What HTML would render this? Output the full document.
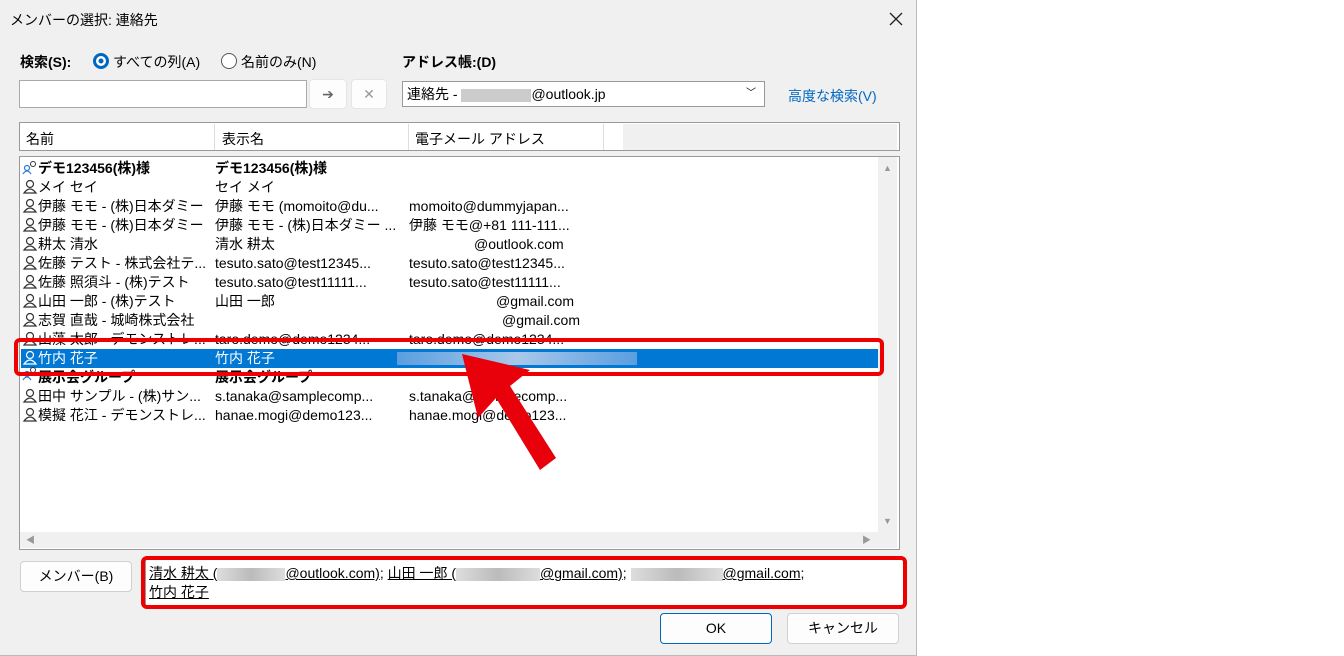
<!DOCTYPE html><html><head><meta charset="utf-8"><style>
body{margin:0;width:1344px;height:656px;background:#fff;font-family:"Liberation Sans","Noto Sans CJK JP",sans-serif;font-size:14px;color:#000;position:relative;overflow:hidden}
.dlg{position:absolute;left:0;top:0;width:916px;height:655px;background:#f0f0f0;border-right:1px solid #bbb;border-bottom:1px solid #bbb}
.a{position:absolute;white-space:nowrap}
.row{position:absolute;left:22px;height:19px;line-height:19px;width:856px}
.row span{position:absolute;white-space:nowrap}
.c1{left:16px}.c2{left:193px}.c3{left:387px}
.b{font-weight:bold}
.btn{position:absolute;background:#fdfdfd;border:1px solid #d0d0d0;border-radius:4px;text-align:center;font-size:14px}
.u{text-decoration:underline}
.blur{display:inline-block;background:linear-gradient(90deg,#ddd,#bbb,#ddd);height:13px;vertical-align:middle}
</style></head><body>
<div class="dlg">
<div class="a" style="left:10px;top:10px;font-size:14px">メンバーの選択: 連絡先</div>
<svg class="a" style="left:889px;top:12px" width="14" height="14"><path d="M1 1L13 13M13 1L1 13" stroke="#222" stroke-width="1.3"/></svg>
<div class="a b" style="left:20px;top:52px">検索(S):</div>
<div class="a" style="left:93px;top:53px;width:10px;height:10px;border:3px solid #0067c0;border-radius:50%;background:#fff"></div>
<div class="a" style="left:96px;top:56px;width:10px;height:10px;border-radius:50%;background:#0067c0;transform:scale(.5)"></div>
<div class="a" style="left:113px;top:52px">すべての列(A)</div>
<div class="a" style="left:221px;top:53px;width:14px;height:14px;border:1px solid #555;border-radius:50%;background:#fff"></div>
<div class="a" style="left:241px;top:52px">名前のみ(N)</div>
<div class="a b" style="left:402px;top:52px">アドレス帳:(D)</div>
<div class="a" style="left:19px;top:80px;width:286px;height:26px;background:#fff;border:1px solid #aaa"></div>
<div class="btn" style="left:309px;top:79px;width:36px;height:28px;line-height:28px;color:#666;border-color:#e5e5e5">➔</div>
<div class="btn" style="left:351px;top:79px;width:34px;height:28px;line-height:28px;color:#999;border-color:#e5e5e5">✕</div>
<div class="a" style="left:402px;top:81px;width:357px;height:24px;background:#fff;border:1px solid #999;line-height:24px;padding-left:4px">連絡先 - <span class="blur" style="width:70px;background:#ccc"></span>@outlook.jp<span style="position:absolute;right:8px;font-size:10px">﹀</span></div>
<div class="a" style="left:788px;top:86px;color:#0067c0">高度な検索(V)</div>
<div class="a" style="left:19px;top:122px;width:879px;height:27px;background:#fff;border:1px solid #999"></div>
<div class="a" style="left:26px;top:129px">名前</div>
<div class="a" style="left:214px;top:124px;height:26px;border-left:1px solid #ddd"></div>
<div class="a" style="left:222px;top:129px">表示名</div>
<div class="a" style="left:408px;top:124px;height:26px;border-left:1px solid #ddd"></div>
<div class="a" style="left:415px;top:129px">電子メール アドレス</div>
<div class="a" style="left:603px;top:124px;height:26px;border-left:1px solid #ddd"></div>
<div class="a" style="left:623px;top:124px;height:26px;width:274px;background:#f0f0f0"></div>
<div class="a" style="left:19px;top:156px;width:879px;height:392px;background:#fff;border:1px solid #999"></div>
<div class="a" style="left:878px;top:157px;width:19px;height:375px;background:#f0f0f0;color:#999;font-size:9px;text-align:center"><div style="margin-top:6px">▲</div><div style="position:absolute;bottom:6px;width:19px">▼</div></div>
<div class="a" style="left:20px;top:532px;width:877px;height:16px;background:#f0f0f0;color:#999;font-size:9px;line-height:16px"><span style="margin-left:6px">◀</span><span style="position:absolute;right:26px">▶</span></div>
<div style="position:absolute;left:0;top:0">
<div class="row b" style="top:159px"><span class="c1">デモ123456(株)様</span><span class="c2">デモ123456(株)様</span></div>
<div class="row" style="top:178px"><span class="c1">メイ セイ</span><span class="c2">セイ メイ</span></div>
<div class="row" style="top:197px"><span class="c1">伊藤 モモ - (株)日本ダミー</span><span class="c2">伊藤 モモ (momoito@du...</span><span class="c3">momoito@dummyjapan...</span></div>
<div class="row" style="top:216px"><span class="c1">伊藤 モモ - (株)日本ダミー</span><span class="c2">伊藤 モモ - (株)日本ダミー ...</span><span class="c3">伊藤 モモ@+81 111-111...</span></div>
<div class="row" style="top:235px"><span class="c1">耕太 清水</span><span class="c2">清水 耕太</span><span class="c3" style="left:452px">@outlook.com</span></div>
<div class="row" style="top:254px"><span class="c1">佐藤 テスト - 株式会社テ...</span><span class="c2">tesuto.sato@test12345...</span><span class="c3">tesuto.sato@test12345...</span></div>
<div class="row" style="top:273px"><span class="c1">佐藤 照須斗 - (株)テスト</span><span class="c2">tesuto.sato@test11111...</span><span class="c3">tesuto.sato@test11111...</span></div>
<div class="row" style="top:292px"><span class="c1">山田 一郎 - (株)テスト</span><span class="c2">山田 一郎</span><span class="c3" style="left:474px">@gmail.com</span></div>
<div class="row" style="top:311px"><span class="c1">志賀 直哉 - 城崎株式会社</span><span class="c3" style="left:480px">@gmail.com</span></div>
<div class="row" style="top:330px"><span class="c1">山藻 太郎 - デモンストレ...</span><span class="c2">taro.demo@demo1234...</span><span class="c3">taro.demo@demo1234...</span></div>
<div class="row" style="top:349px;background:#0078d4;color:#fff;left:21px;width:857px"><span class="c1" style="left:17px">竹内 花子</span><span class="c2" style="left:194px">竹内 花子</span><span style="left:376px;top:3px;width:240px;height:13px;background:linear-gradient(90deg,#5a9ee0,#a8c8ea,#5a9ee0)"></span></div>
<div class="row b" style="top:368px"><span class="c1">展示会グループ</span><span class="c2">展示会グループ</span></div>
<div class="row" style="top:387px"><span class="c1">田中 サンプル - (株)サン...</span><span class="c2">s.tanaka@samplecomp...</span><span class="c3">s.tanaka@samplecomp...</span></div>
<div class="row" style="top:406px"><span class="c1">模擬 花江 - デモンストレ...</span><span class="c2">hanae.mogi@demo123...</span><span class="c3">hanae.mogi@demo123...</span></div>
</div>
<svg class="a" style="left:20px;top:160px" width="20" height="266">
<g fill="none" stroke="#333" stroke-width="1.2">
<circle cx="10" cy="24" r="3.5"/><path d="M4 33 q6 -8 12 0 z"/>
<circle cx="10" cy="43" r="3.5"/><path d="M4 52 q6 -8 12 0 z"/>
<circle cx="10" cy="62" r="3.5"/><path d="M4 71 q6 -8 12 0 z"/>
<circle cx="10" cy="81" r="3.5"/><path d="M4 90 q6 -8 12 0 z"/>
<circle cx="10" cy="100" r="3.5"/><path d="M4 109 q6 -8 12 0 z"/>
<circle cx="10" cy="119" r="3.5"/><path d="M4 128 q6 -8 12 0 z"/>
<circle cx="10" cy="138" r="3.5"/><path d="M4 147 q6 -8 12 0 z"/>
<circle cx="10" cy="157" r="3.5"/><path d="M4 166 q6 -8 12 0 z"/>
<circle cx="10" cy="176" r="3.5"/><path d="M4 185 q6 -8 12 0 z"/>
<circle cx="10" cy="233" r="3.5"/><path d="M4 242 q6 -8 12 0 z"/>
<circle cx="10" cy="252" r="3.5"/><path d="M4 261 q6 -8 12 0 z"/>
</g>
<g fill="none" stroke="#fff" stroke-width="1.2"><circle cx="10" cy="195" r="3.5"/><path d="M4 204 q6 -8 12 0 z"/></g>
<g fill="none" stroke="#2a7ad5" stroke-width="1.2"><circle cx="7" cy="8" r="2.5"/><path d="M3 14 q4 -6 8 0"/><circle cx="7" cy="214" r="2.5"/><path d="M3 220 q4 -6 8 0"/></g>
<g fill="none" stroke="#333" stroke-width="1"><circle cx="13" cy="4" r="2.5"/><circle cx="13" cy="210" r="2.5"/></g>
</svg>
<div class="btn" style="left:20px;top:561px;width:110px;height:29px;line-height:29px">メンバー(B)</div>
<div class="a" style="left:145px;top:557px;width:757px;height:47px;background:#fff;border:1px solid #999"></div>
<div class="a" style="left:149px;top:564px;line-height:19px"><span class="u">清水 耕太 (<span class="blur" style="width:68px"></span>@outlook.com)</span>; <span class="u">山田 一郎 (<span class="blur" style="width:84px"></span>@gmail.com)</span>; <span class="u"><span class="blur" style="width:92px"></span>@gmail.com</span>;<br><span class="u">竹内 花子</span></div>
<div class="btn" style="left:660px;top:613px;width:110px;height:29px;line-height:29px;border-color:#0067c0">OK</div>
<div class="btn" style="left:787px;top:613px;width:110px;height:29px;line-height:29px">キャンセル</div>
</div>
<div class="a" style="left:14px;top:338px;width:862px;height:30px;border:4px solid #e00;border-radius:6px"></div>
<div class="a" style="left:141px;top:556px;width:758px;height:45px;border:4px solid #e00;border-radius:6px"></div>
<svg class="a" style="left:440px;top:340px" width="130" height="140"><polygon points="22,14 90,30 70,46 116,118 100,130 56,58 38,78" fill="#e8000b"/></svg>
</body></html>
